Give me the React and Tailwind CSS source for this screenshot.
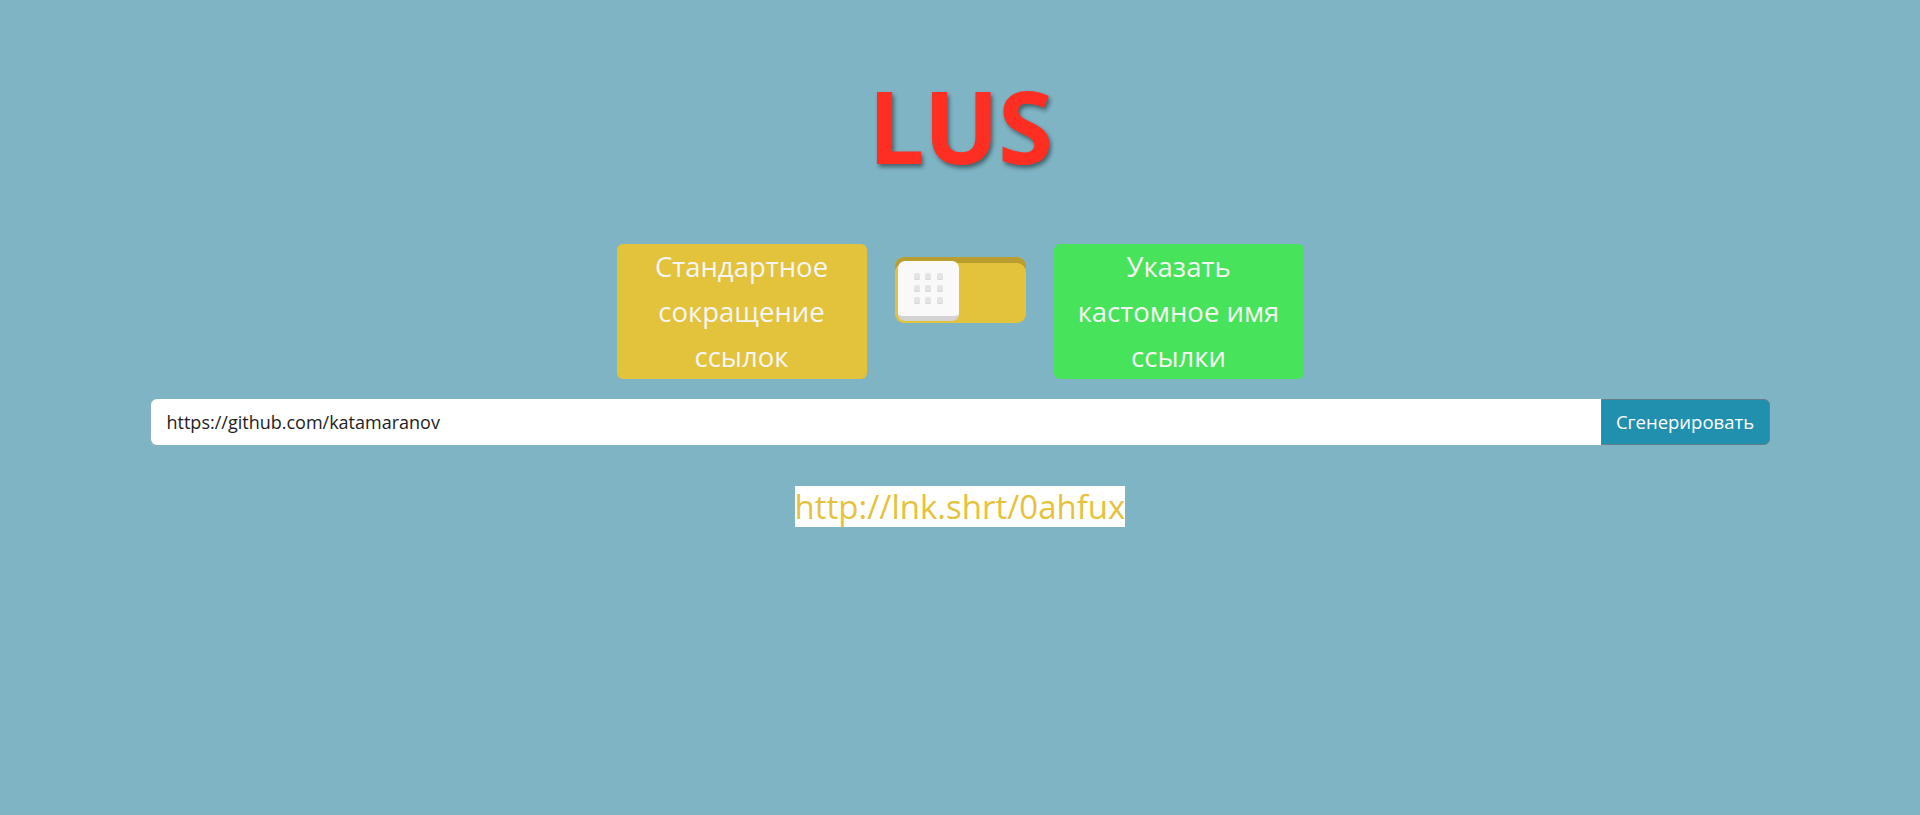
import React from 'react';

const Knob = () => (
    <div className="w-[61px] h-[60px] rounded-[7px] bg-[#f9f9f9] border-b-[5px] border-[#d3d3d3] grid grid-cols-3 gap-x-[6px] gap-y-[5px] content-center justify-center px-[16px]">
        {Array.from({ length: 9 }).map((_, i) => (
            <div key={i} className="w-[6px] h-[7px] rounded-[2px] bg-[#e4e4e4] shadow-[inset_0_-1px_0_#d6d6d6]" />
        ))}
    </div>
);

const App = () => {
    return (
        <div className="min-h-[815px] w-full bg-[#7eb4c4] font-['Open_Sans',sans-serif] flex flex-col items-center">
            <h1
                className="mt-[75px] text-[100px] leading-none font-bold text-[#ff2e22] tracking-[-1px]"
                style={{ textShadow: '2px 3px 4px rgba(0,0,0,0.45)' }}
            >
                LUS
            </h1>

            <div className="mt-[69px] flex items-start gap-[28px]">
                <div className="w-[250px] h-[135px] rounded-[6px] bg-[#e2c33b] text-[#f5f5f5] text-[27.5px] leading-[45px] text-center px-[14px]">
                    Стандартное сокращение ссылок
                </div>
                <div className="mt-[13px] w-[131px] h-[66px] rounded-[9px] bg-[#e2c33b] shadow-[inset_0_6px_0_#b89d30] pt-[4px] pl-[3px]">
                    <Knob />
                </div>
                <div className="w-[250px] h-[135px] rounded-[6px] bg-[#47e35a] text-[#f5f5f5] text-[27.5px] leading-[45px] text-center px-[14px]">
                    Указать кастомное имя ссылки
                </div>
            </div>

            <div className="mt-[20px] w-[1619px] flex h-[46px]">
                <div className="flex-1 bg-white rounded-l-[6px] flex items-center pl-[16px] text-[18px] text-[#222]">
                    https://github.com/katamaranov
                </div>
                <button className="w-[169px] bg-[#2190ae] border border-[#62808a] rounded-r-[6px] text-white text-[18.5px]">
                    Сгенерировать
                </button>
            </div>

            <div className="mt-[41px]">
                <span className="inline-block bg-white h-[41px] leading-[41px] text-[33px] text-[#e6c23c]">
                    http://lnk.shrt/0ahfux
                </span>
            </div>
        </div>
    );
};

export default App;
